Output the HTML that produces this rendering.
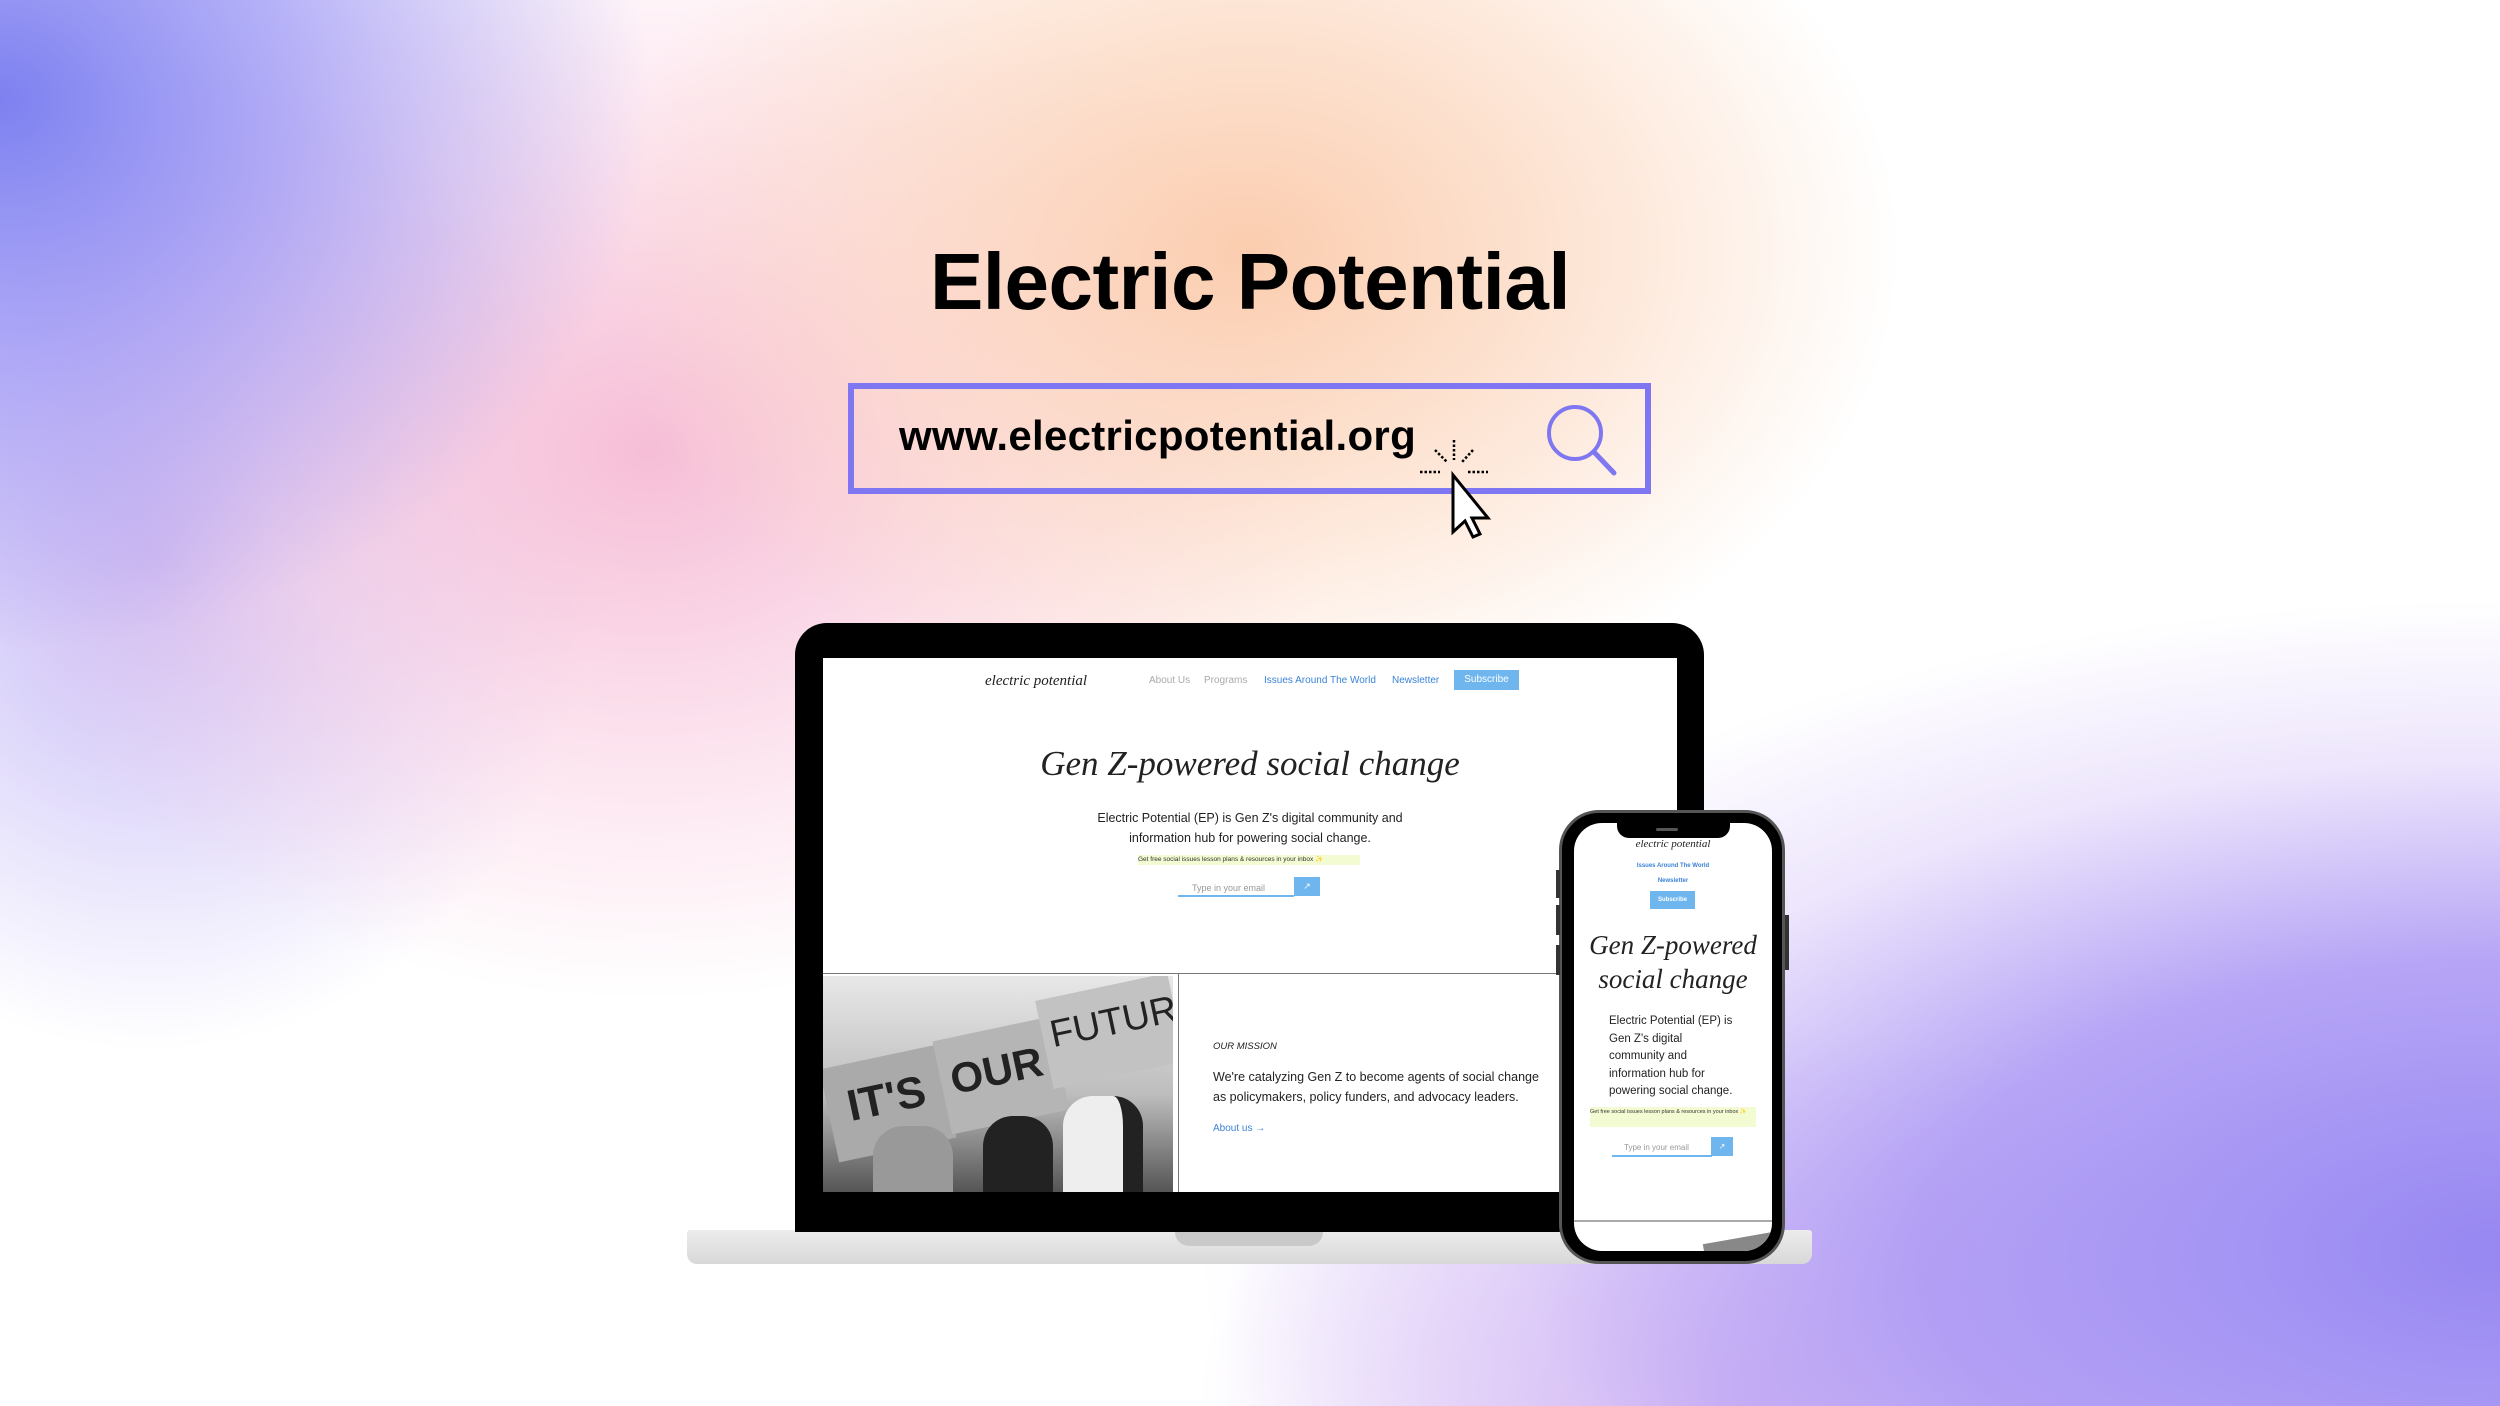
<!DOCTYPE html>
<html><head><meta charset="utf-8"><style>
*{margin:0;padding:0;box-sizing:border-box}
html,body{width:2500px;height:1406px;overflow:hidden}
body{position:relative;font-family:"Liberation Sans",sans-serif;background:#fff}
.bg{position:absolute;inset:0;background:
radial-gradient(ellipse 650px 550px at 0px 100px,rgba(125,128,240,1) 0%,rgba(150,145,245,.7) 45%,rgba(255,255,255,0) 100%),
radial-gradient(ellipse 1300px 650px at 2500px 1250px,rgba(150,135,242,1) 0%,rgba(170,150,244,.85) 45%,rgba(210,190,248,.4) 75%,rgba(255,255,255,0) 100%),
radial-gradient(ellipse 550px 380px at 1750px 1406px,rgba(205,170,240,.9) 0%,rgba(255,255,255,0) 100%),
radial-gradient(ellipse 650px 480px at 1250px 250px,rgba(251,205,175,1) 0%,rgba(252,215,190,.6) 55%,rgba(255,255,255,0) 100%),
radial-gradient(ellipse 700px 550px at 650px 450px,rgba(246,190,215,1) 0%,rgba(250,205,225,.55) 55%,rgba(255,255,255,0) 100%),
radial-gradient(ellipse 450px 500px at 150px 550px,rgba(180,165,245,.8) 0%,rgba(255,255,255,0) 100%);}
.abs{position:absolute}
h1{position:absolute;left:0;width:2500px;top:236px;text-align:center;font-size:80px;font-weight:bold;letter-spacing:-0.5px;color:#000}
.search{left:848px;top:383px;width:803px;height:111px;border:6px solid #7f76f1}
.url{left:899px;top:412px;font-size:42px;font-weight:bold;color:#000;letter-spacing:0.3px}
.serif{font-family:"Liberation Serif",serif;font-style:italic}
.sc{background:#fff}
</style></head><body>
<div class="bg"></div>
<h1>Electric Potential</h1>
<div class="abs search"></div>
<div class="abs url">www.electricpotential.org</div>
<svg class="abs" style="left:1530px;top:395px" width="110" height="90" viewBox="0 0 110 90"><circle cx="45" cy="38" r="26" fill="none" stroke="#7f76f1" stroke-width="4"/><line x1="64" y1="57" x2="84" y2="78" stroke="#7f76f1" stroke-width="5" stroke-linecap="round"/></svg>
<svg class="abs" style="left:1420px;top:440px" width="100" height="100" viewBox="0 0 100 100">
<g stroke="#000" stroke-width="2.5" stroke-dasharray="2.5 2">
<line x1="34" y1="0" x2="34" y2="20"/><line x1="15" y1="10" x2="27" y2="22"/><line x1="53" y1="10" x2="42" y2="22"/><line x1="0" y1="32" x2="20" y2="32"/><line x1="48" y1="32" x2="68" y2="32"/></g>
<path d="M33 35 L33 92 L45 81 L53 97 L60 94 L52 78 L68 78 Z" fill="#fff" stroke="#000" stroke-width="3"/></svg>

<div class="abs" style="left:687px;top:1230px;width:1125px;height:34px;background:linear-gradient(#ececec,#d8d8d8);border-radius:3px 3px 10px 10px"></div>
<div class="abs" style="left:1175px;top:1232px;width:148px;height:14px;background:#c9c9c9;border-radius:0 0 14px 14px"></div>
<div class="abs" style="left:795px;top:623px;width:909px;height:609px;background:#000;border-radius:32px 32px 0 0"></div>
<div class="abs sc" style="left:823px;top:658px;width:854px;height:534px;overflow:hidden">
 <div class="abs serif" style="left:162px;top:15px;font-size:15px;color:#222">electric potential</div>
 <div class="abs" style="left:326px;top:17px;font-size:10px;color:#aaa">About Us</div>
 <div class="abs" style="left:381px;top:17px;font-size:10px;color:#aaa">Programs</div>
 <div class="abs" style="left:441px;top:17px;font-size:10px;color:#3b83d6">Issues Around The World</div>
 <div class="abs" style="left:569px;top:17px;font-size:10px;color:#3b83d6">Newsletter</div>
 <div class="abs" style="left:631px;top:12px;width:65px;height:20px;background:#6fb5ee;color:#fff;font-size:10px;text-align:center;line-height:20px">Subscribe</div>
 <div class="abs serif" style="left:0;width:854px;top:86px;text-align:center;font-size:35px;color:#222">Gen Z-powered social change</div>
 <div class="abs" style="left:200px;width:454px;top:150px;text-align:center;font-size:12.5px;line-height:20px;color:#222">Electric Potential (EP) is Gen Z's digital community and<br>information hub for powering social change.</div>
 <div class="abs" style="left:315px;top:197px;width:222px;height:10px;background:#f3fbd2;font-size:6.5px;line-height:10px;color:#333;white-space:nowrap;overflow:hidden">Get free social issues lesson plans &amp; resources in your inbox ✨</div>
 <div class="abs" style="left:355px;top:221px;width:116px;height:18px;border-bottom:2px solid #6fb5ee;font-size:9px;color:#999;padding:4px 0 0 14px;white-space:nowrap">Type in your email</div>
 <div class="abs" style="left:471px;top:219px;width:26px;height:19px;background:#6fb5ee;color:#fff;font-size:9px;text-align:center;line-height:19px">↗</div>
 <div class="abs" style="left:0;top:315px;width:854px;height:1px;background:#777"></div>
 <div class="abs" style="left:355px;top:315px;width:1px;height:219px;background:#777"></div>
 <div class="abs" style="left:0;top:318px;width:350px;height:216px;background:linear-gradient(#e8e8e8,#bdbdbd 55%,#555 100%);overflow:hidden">
  <div class="abs" style="left:5px;top:80px;width:120px;height:95px;background:#aaa;transform:rotate(-12deg);font:bold 44px 'Liberation Sans';color:#222;padding:18px 0 0 20px">IT'S</div>
  <div class="abs" style="left:118px;top:52px;width:120px;height:95px;background:#b5b5b5;transform:rotate(-12deg);font:bold 42px 'Liberation Sans';color:#222;padding:18px 0 0 10px">OUR</div>
  <div class="abs" style="left:220px;top:10px;width:135px;height:90px;background:#c2c2c2;transform:rotate(-12deg);font:38px 'Liberation Sans';color:#222;padding:16px 0 0 8px">FUTURE</div>
  <div class="abs" style="left:160px;top:140px;width:70px;height:90px;background:#222;border-radius:30px 30px 0 0"></div>
  <div class="abs" style="left:240px;top:120px;width:80px;height:100px;background:#eee;border-radius:30px 30px 0 0;border-right:20px solid #222"></div>
  <div class="abs" style="left:50px;top:150px;width:80px;height:80px;background:#999;border-radius:30px 30px 0 0"></div>
 </div>
 <div class="abs" style="left:390px;top:383px;font-size:9.5px;font-style:italic;color:#222">OUR MISSION</div>
 <div class="abs" style="left:390px;top:409px;width:470px;font-size:12.5px;line-height:20px;color:#222;white-space:nowrap">We're catalyzing Gen Z to become agents of social change<br>as policymakers, policy funders, and advocacy leaders.</div>
 <div class="abs" style="left:390px;top:465px;font-size:10px;color:#3b83d6">About us →</div>
</div>

<div class="abs" style="left:1559px;top:810px;width:226px;height:454px;background:#000;border-radius:40px;border:3px solid #555"></div>
<div class="abs" style="left:1556px;top:870px;width:4px;height:28px;background:#333"></div>
<div class="abs" style="left:1556px;top:905px;width:4px;height:30px;background:#333"></div>
<div class="abs" style="left:1556px;top:945px;width:4px;height:30px;background:#333"></div>
<div class="abs" style="left:1785px;top:915px;width:4px;height:55px;background:#333"></div>
<div class="abs sc" style="left:1574px;top:823px;width:198px;height:428px;border-radius:28px;overflow:hidden">
 <div class="abs" style="left:43px;top:0;width:113px;height:15px;background:#000;border-radius:0 0 12px 12px"></div>
 <div class="abs" style="left:82px;top:5px;width:22px;height:3px;background:#555;border-radius:2px"></div>
 <div class="abs serif" style="left:0;width:198px;top:15px;text-align:center;font-size:11px;color:#222">electric potential</div>
 <div class="abs" style="left:0;width:198px;top:40px;text-align:center;font-size:6px;color:#3b83d6;font-weight:bold">Issues Around The World</div>
 <div class="abs" style="left:0;width:198px;top:55px;text-align:center;font-size:6px;color:#3b83d6;font-weight:bold">Newsletter</div>
 <div class="abs" style="left:76px;top:68px;width:45px;height:18px;background:#6fb5ee;color:#fff;font-size:6px;text-align:center;line-height:18px;font-weight:bold">Subscribe</div>
 <div class="abs serif" style="left:0;width:198px;top:105px;text-align:center;font-size:27px;line-height:34px;color:#222">Gen Z-powered<br>social change</div>
 <div class="abs" style="left:35px;top:190px;font-size:11.5px;line-height:17.5px;color:#222">Electric Potential (EP) is<br>Gen Z's digital<br>community and<br>information hub for<br>powering social change.</div>
 <div class="abs" style="left:16px;top:284px;width:166px;height:20px;background:#f3fbd2;font-size:5.5px;line-height:9px;color:#333;padding-top:1px">Get free social issues lesson plans &amp; resources in your inbox ✨</div>
 <div class="abs" style="left:38px;top:315px;width:100px;height:19px;border-bottom:2px solid #6fb5ee;font-size:8px;color:#999;padding:5px 0 0 12px;white-space:nowrap">Type in your email</div>
 <div class="abs" style="left:137px;top:314px;width:22px;height:19px;background:#6fb5ee;color:#fff;font-size:8px;text-align:center;line-height:19px">↗</div>
 <div class="abs" style="left:0;top:397px;width:198px;height:2px;background:#aaa"></div>
 <div class="abs" style="left:130px;top:415px;width:70px;height:20px;background:#888;transform:rotate(-10deg)"></div>
</div>
</body></html>
